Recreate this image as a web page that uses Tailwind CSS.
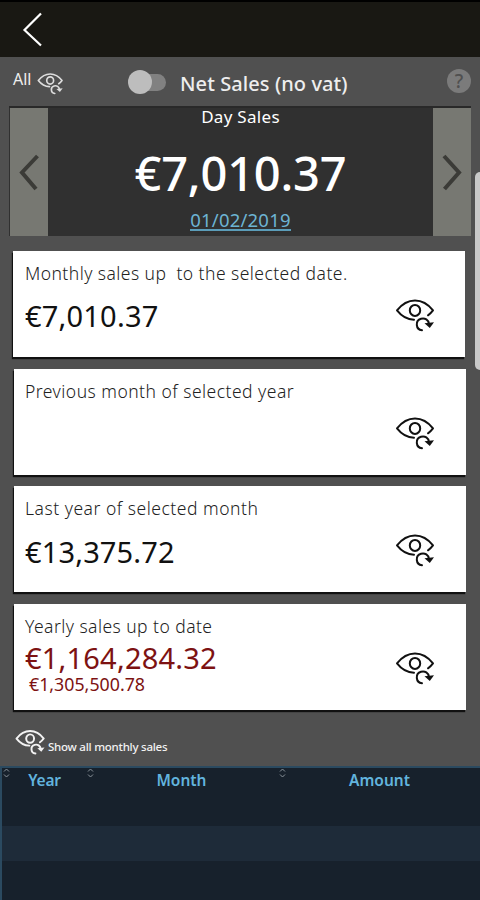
<!DOCTYPE html>
<html lang="en">
<head>
  <meta charset="UTF-8">
  <meta name="viewport" content="width=device-width, initial-scale=1.0">
  <title>Day Sales</title>
  <script src="https://cdn.jsdelivr.net/npm/@tailwindcss/browser@4"></script>
</head>
<body class="bg-[#505050] h-[900px] overflow-hidden font-['Noto_Sans','Open_Sans',sans-serif] relative">
  <!-- Shared icon -->
  <svg class="hidden">
    <symbol id="eye" viewBox="0 0 41 34">
      <g fill="none" stroke="currentColor" stroke-linecap="round" stroke-linejoin="round">
        <path d="M19 21.8C12 21.5 6 17.5 2 12.4C7 6 13 2.5 20 2.5S33 6 38 12.4C36.5 14.4 35 16 33 17.3"/>
        <ellipse cx="20" cy="12.4" rx="5.2" ry="5.5"/>
        <path d="M27 32.2C20.5 31.5 20 22.5 26 20.8C30 19.6 33.5 22 34 26"/>
      </g>
      <path d="M29.5 25.2L39 24.2L34.8 30Z" fill="currentColor"/>
    </symbol>
  </svg>

  <!-- Header -->
  <header class="h-[57px] bg-[#191813] border-t-2 border-black pl-[22px] pt-[9px]">
    <svg class="w-5 h-9" viewBox="0 0 20 36" fill="none" stroke="#fff" stroke-width="2.2"><path d="M19 2.5L2.5 19L19 34.5"/></svg>
  </header>

  <!-- Toolbar -->
  <div class="h-[49px] flex text-[#eee]">
    <span class="ml-[13px] mt-[11px] text-[16px] leading-[22px] w-[24px]">All</span>
    <svg class="w-[27px] h-[23px] mt-[15px] stroke-[2.5] text-[#ddd]"><use href="#eye"/></svg>
    <div class="ml-16 mt-[13px] w-[38px] h-6 flex items-center">
      <span class="w-6 h-6 rounded-full bg-[#bdbdbd] z-10 shrink-0"></span>
      <span class="w-[26px] h-[17px] rounded-full bg-[#818181] -ml-3 shrink-0"></span>
    </div>
    <span class="ml-[14px] mt-[12px] text-[20px] leading-[30px] tracking-[0.08px] font-medium whitespace-nowrap">Net Sales (no vat)</span>
    <span class="ml-auto mr-[9px] mt-[12px] size-6 rounded-full bg-[#7b7b7b] text-[#505050] text-[19px] leading-6 text-center font-medium">?</span>
  </div>

  <!-- Day selector -->
  <section class="mx-[9px] h-[130px] flex bg-[#303030] border-t-2 border-[#292929]">
    <button class="w-[38px] ml-px bg-[#777872] flex items-center justify-center">
      <svg class="w-5 h-[37px]" viewBox="0 0 20 37" fill="none" stroke="#3b3b37" stroke-width="4"><path d="M18.5 2L3 18.5L17 35"/></svg>
    </button>
    <div class="flex-1 text-center text-white">
      <p class="text-[17px] leading-[20px] tracking-[0.3px] -mt-px">Day Sales</p>
      <p class="text-[47px] leading-[60px] mt-[16px] font-medium tracking-[-0.2px]">€7,010.37</p>
      <p class="text-[18.5px] leading-6 mt-[5px] text-[#6db4d3]"><span class="border-b-2 border-[#5b9db9] inline-block h-[23px] leading-6 tracking-[0.2px]">01/02/2019</span></p>
    </div>
    <button class="w-[38px] bg-[#777872] flex items-center justify-center">
      <svg class="w-5 h-[37px]" viewBox="0 0 20 37" fill="none" stroke="#3b3b37" stroke-width="4"><path d="M2 2L17 18.5L2.5 35"/></svg>
    </button>
  </section>

  <!-- Sales cards -->
  <main class="pt-[15px] px-[14px] flex flex-col gap-[11.5px] text-[#111]">
    <article class="h-[106px] -ml-px mr-px bg-white shadow-[-1px_2px_1px_#111] flex justify-between pl-3 pr-[29px]">
      <div>
        <h2 class="text-[17.5px] leading-6 mt-[10px] font-light text-[#222] tracking-[0.45px] whitespace-pre">Monthly sales up  to the selected date.</h2>
        <p class="text-[29px] leading-9 mt-[13px] tracking-[0.2px]">€7,010.37</p>
      </div>
      <svg class="w-[41px] h-[34px] mt-[47px] stroke-2"><use href="#eye"/></svg>
    </article>
    <article class="h-[106px] bg-white shadow-[-1px_2px_1px_#111] flex justify-between pl-[11px] pr-[30px]">
      <h2 class="text-[17.5px] leading-6 mt-[10px] font-light text-[#222] tracking-[0.48px]">Previous month of selected year</h2>
      <svg class="w-[41px] h-[34px] mt-[47px] stroke-2"><use href="#eye"/></svg>
    </article>
    <article class="h-[106px] bg-white shadow-[-1px_2px_1px_#111] flex justify-between pl-[11px] pr-[30px]">
      <div>
        <h2 class="text-[17.5px] leading-6 mt-[10px] font-light text-[#222] tracking-[0.52px]">Last year of selected month</h2>
        <p class="text-[29px] leading-9 mt-[14px] tracking-[0.15px]">€13,375.72</p>
      </div>
      <svg class="w-[41px] h-[34px] mt-[47px] stroke-2"><use href="#eye"/></svg>
    </article>
    <article class="h-[106px] bg-white shadow-[-1px_2px_1px_#111] flex justify-between pl-[11px] pr-[30px]">
      <div>
        <h2 class="text-[17.5px] leading-6 mt-[10px] font-light text-[#222] tracking-[0.45px]">Yearly sales up to date</h2>
        <p class="text-[29px] leading-[34px] mt-[3px] tracking-[0.2px] text-[#7d1212]">€1,164,284.32</p>
        <p class="text-[17.8px] leading-5 -mt-px ml-1 text-[#7d1212]">€1,305,500.78</p>
      </div>
      <svg class="w-[41px] h-[34px] mt-[47px] stroke-2"><use href="#eye"/></svg>
    </article>
  </main>

  <div class="h-[56px] pl-[15px] flex text-[#f2f2f2]">
    <svg class="w-[31px] h-[26px] mt-[19px] stroke-[2.6]"><use href="#eye"/></svg>
    <span class="text-[11.5px] leading-4 mt-[29px] ml-[2px] tracking-[-0.25px] font-medium">Show all monthly sales</span>
  </div>

  <!-- Monthly table -->
  <section class="h-[141px] bg-[#17212c] border-l-2 border-t-2 border-[#2b4a60] text-[#62b4de]">
    <div class="h-[58px] grid grid-cols-[84px_192px_1fr] text-center text-[15.5px] leading-6 font-semibold">
      <div class="flex">
        <svg class="w-[7px] h-[11px] ml-[1px]" viewBox="0 0 7 11" fill="none" stroke="#8b949b"><path d="M1 3.5L3.5 1L6 3.5M1 6.5L3.5 9L6 6.5"/></svg>
        <span class="flex-1 pr-[7px] tracking-[-0.2px]">Year</span>
      </div>
      <div class="flex">
        <svg class="w-[7px] h-[11px] ml-[1px]" viewBox="0 0 7 11" fill="none" stroke="#8b949b"><path d="M1 3.5L3.5 1L6 3.5M1 6.5L3.5 9L6 6.5"/></svg>
        <span class="flex-1 pr-[9px]">Month</span>
      </div>
      <div class="flex">
        <svg class="w-[7px] h-[11px] ml-[1px]" viewBox="0 0 7 11" fill="none" stroke="#8b949b"><path d="M1 3.5L3.5 1L6 3.5M1 6.5L3.5 9L6 6.5"/></svg>
        <span class="flex-1 pr-[7px]">Amount</span>
      </div>
    </div>
    <div class="h-[35px] bg-[#1e2b39]"></div>
  </section>

  <!-- Scrollbar -->
  <div class="absolute right-0 top-[172px] w-[5px] h-[198px] rounded-l-[5px] bg-[#c8c8c8]"></div>
</body>
</html>
